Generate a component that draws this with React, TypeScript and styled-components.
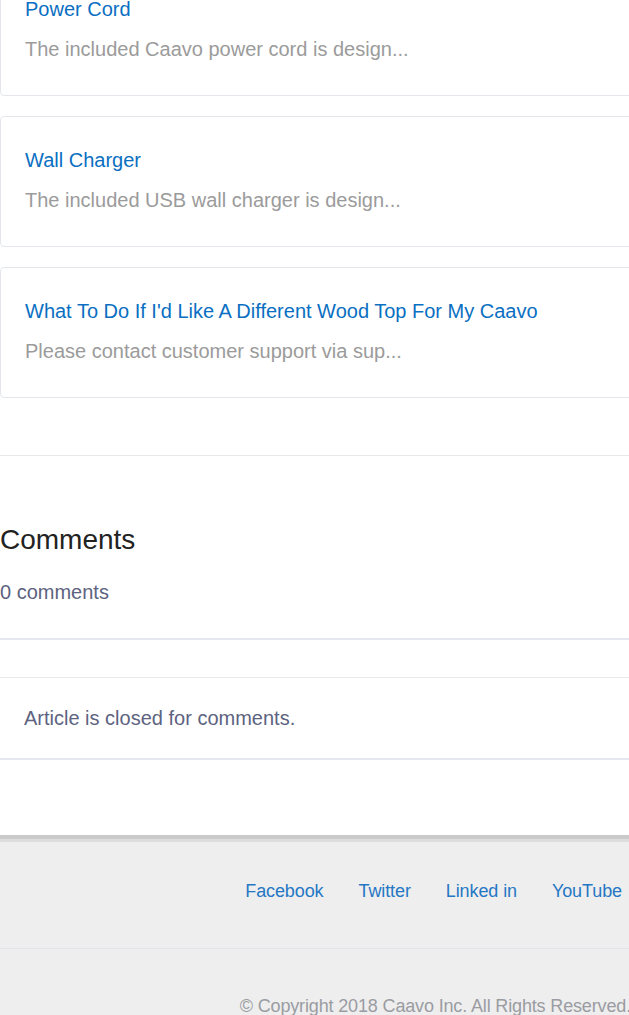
import React from 'react'
import styled, { createGlobalStyle } from 'styled-components'

const GlobalStyle = createGlobalStyle`
  html, body {
    margin: 0;
    padding: 0;
    background: #ffffff;
    overflow-x: hidden;
  }
  body {
    font-family: "Liberation Sans", Arial, Helvetica, sans-serif;
    -webkit-font-smoothing: antialiased;
  }
`

const Page = styled.div`
  width: 629px;
  overflow: hidden;
`

const Related = styled.div`
  width: 660px;
  margin-top: -35px;
  display: flex;
  flex-direction: column;
  gap: 20px;
`

const ArticleCard = styled.div`
  border: 1px solid #e3e6eb;
  border-radius: 4px;
  padding: 30px 24px 33px;
  display: flex;
  flex-direction: column;
  gap: 14px;
`

const CardTitle = styled.a`
  font-size: 20px;
  line-height: 26px;
  color: #0a6fc2;
  text-decoration: none;
`

const CardSnippet = styled.p`
  margin: 0;
  font-size: 20px;
  line-height: 26px;
  color: #9b9b9b;
`

const Divider = styled.hr`
  margin: 57px 0 0;
  border: 0;
  border-top: 1px solid #e6e8ec;
`

const CommentsHeader = styled.section`
  padding: 67px 0 33px;
  border-bottom: 2px solid #e4e7ed;
`

const CommentsTitle = styled.h2`
  margin: 0;
  font-size: 28px;
  line-height: 34px;
  font-weight: 400;
  color: #222222;
`

const CommentsCount = styled.div`
  margin-top: 22px;
  font-size: 20px;
  line-height: 26px;
  color: #5d6380;
`

const ClosedBox = styled.div`
  margin-top: 37px;
  border-top: 1px solid #eaeaea;
  border-bottom: 2px solid #e4e7ed;
  padding: 27px 24px 27px;
  font-size: 20px;
  line-height: 26px;
  color: #5d6380;
`

const Footer = styled.footer`
  margin-top: 75px;
  background: #eeeeee;
  border-top: 4px solid #cacaca;
  box-shadow: inset 0 3px 0 #dddddd;
`

const FooterLinks = styled.nav`
  display: flex;
  justify-content: flex-end;
  gap: 35px;
  padding: 39px 7px 44px 0;
  border-bottom: 1px solid #e2e5e9;
`

const FooterLink = styled.a`
  font-size: 18px;
  line-height: 26px;
  letter-spacing: -0.1px;
  color: #2677c4;
  text-decoration: none;
`

const Copyright = styled.div`
  display: flex;
  justify-content: flex-end;
  padding-top: 44px;
  margin-right: -2px;
  height: 40px;
  font-size: 18px;
  line-height: 26px;
  letter-spacing: -0.15px;
  color: #9a9ca2;
  white-space: nowrap;
`

const articles = [
  { title: 'Power Cord', snippet: 'The included Caavo power cord is design...' },
  { title: 'Wall Charger', snippet: 'The included USB wall charger is design...' },
  {
    title: "What To Do If I'd Like A Different Wood Top For My Caavo",
    snippet: 'Please contact customer support via sup...',
  },
]

const links = ['Facebook', 'Twitter', 'Linked in', 'YouTube']

const App = () => {
  return (
    <Page>
      <GlobalStyle />
      <Related>
        {articles.map((a) => (
          <ArticleCard key={a.title}>
            <CardTitle href="#">{a.title}</CardTitle>
            <CardSnippet>{a.snippet}</CardSnippet>
          </ArticleCard>
        ))}
      </Related>
      <Divider />
      <CommentsHeader>
        <CommentsTitle>Comments</CommentsTitle>
        <CommentsCount>0 comments</CommentsCount>
      </CommentsHeader>
      <ClosedBox>Article is closed for comments.</ClosedBox>
      <Footer>
        <FooterLinks>
          {links.map((l) => (
            <FooterLink key={l} href="#">
              {l}
            </FooterLink>
          ))}
        </FooterLinks>
        <Copyright>© Copyright 2018 Caavo Inc. All Rights Reserved.</Copyright>
      </Footer>
    </Page>
  )
}

export default App
